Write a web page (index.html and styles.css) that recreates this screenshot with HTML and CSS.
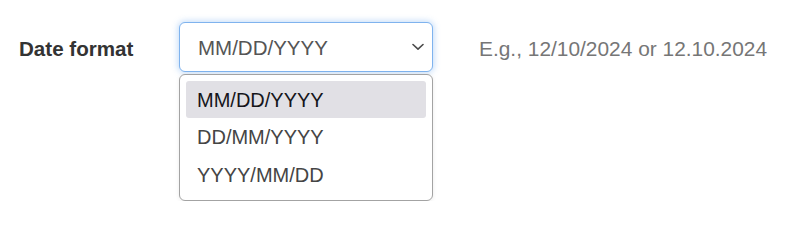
FILE: index.html
```html
<!DOCTYPE html>
<html lang="en">
<head>
<meta charset="utf-8">
<title>Date format</title>
<link rel="stylesheet" href="styles.css">
</head>
<body>
<div class="row">
  <label class="label">Date format</label>
  <div class="select-wrap">
    <div class="select">
      <span class="value">MM/DD/YYYY</span>
      <svg class="chevron" width="12" height="8" viewBox="0 0 12 8"><path d="M1 1.5 L6 6.2 L11 1.5" fill="none" stroke="#4a4a4a" stroke-width="1.6" stroke-linecap="round" stroke-linejoin="round"/></svg>
    </div>
    <ul class="menu">
      <li class="item active">MM/DD/YYYY</li>
      <li class="item">DD/MM/YYYY</li>
      <li class="item">YYYY/MM/DD</li>
    </ul>
  </div>
  <span class="hint">E.g., 12/10/2024 or 12.10.2024</span>
</div>
</body>
</html>
```

FILE: styles.css
```css
html, body {
  margin: 0;
  padding: 0;
  background: #ffffff;
}
body {
  font-family: "Liberation Sans", Arial, sans-serif;
}
.row {
  display: flex;
  align-items: flex-start;
  padding: 22px 0 0 19px;
}
.label {
  width: 160px;
  height: 50px;
  display: flex;
  align-items: center;
  font-weight: bold;
  font-size: 20.6px;
  color: #333333;
  padding-top: 3px;
  box-sizing: border-box;
}
.select-wrap {
  display: flex;
  flex-direction: column;
  gap: 2px;
  width: 254px;
}
.select {
  box-sizing: border-box;
  height: 50px;
  width: 254px;
  border: 1px solid #7fb3ee;
  border-radius: 6px;
  box-shadow: 0 0 6px 1px rgba(120, 175, 240, 0.45);
  display: flex;
  align-items: center;
  justify-content: space-between;
  padding: 2px 8px 0 18px;
  background: #fff;
}
.value {
  font-size: 20.5px;
  color: #555555;
}
.chevron {
  display: block;
  margin-top: -2px;
}
.menu {
  box-sizing: border-box;
  width: 254px;
  margin: 0;
  padding: 6px 6px 6px 6px;
  list-style: none;
  background: #fff;
  border: 1px solid #a3a3a3;
  border-radius: 6px;
  box-shadow: 0 1px 4px rgba(0, 0, 0, 0.08);
}
.item {
  font-size: 20px;
  line-height: 37px;
  height: 38px;
  box-sizing: border-box;
  padding: 1px 0 0 11px;
  color: #454545;
  border-radius: 3px;
}
.item.active {
  background: #e1e0e5;
  color: #15151a;
  height: 37px;
}
.hint {
  margin-left: 46px;
  height: 50px;
  display: flex;
  align-items: center;
  box-sizing: border-box;
  font-size: 20.9px;
  color: #767676;
  padding-top: 3px;
}
```
